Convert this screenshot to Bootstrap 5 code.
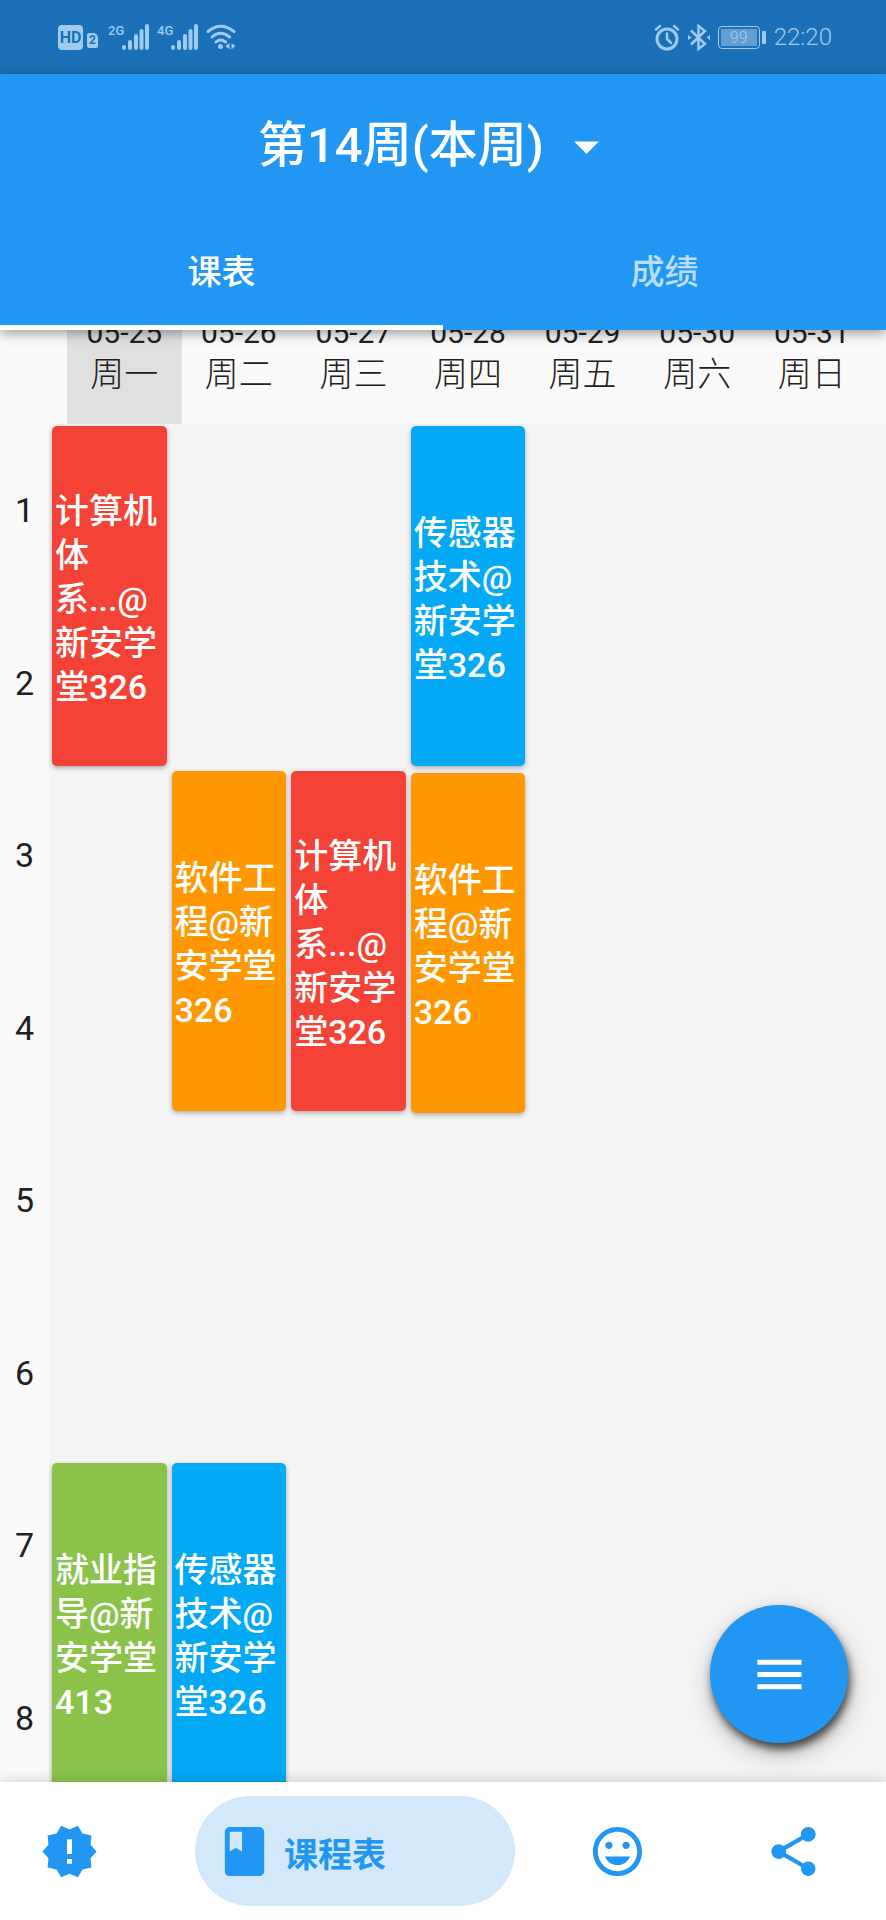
<!DOCTYPE html>
<html lang="zh-CN">
<head>
<meta charset="utf-8">
<meta name="viewport" content="width=device-width, initial-scale=1">
<title>课程表</title>
<link href="https://cdn.jsdelivr.net/npm/bootstrap@5.3.0/dist/css/bootstrap.min.css" rel="stylesheet">
<style>
  :root { --main: #2196f3; --soft: #9fcbf0; }
  body { font-family: Roboto, "Noto Sans CJK SC", sans-serif; font-size: 34px; line-height: 44px; color: #212121; background: #fafafa; }
  svg { display: block; flex: none; }
  .glyph { width: 59px; height: 59px; fill: currentColor; }

  /* system status bar */
  .statusbar { height: 74px; background: #1b70b7; color: var(--soft); padding: 0 54px 0 58px; }
  .hd { width: 25px; height: 25px; border-radius: 4px; background: var(--soft); color: #1b70b7; font-size: 16px; line-height: 25px; font-weight: 700; }
  .sim { width: 11px; height: 15px; margin: 7px 10px 0 4px; border-radius: 2px 5px 2px 2px; background: var(--soft); color: #1b70b7; font-size: 12px; line-height: 15px; font-weight: 700; }
  .net { font-size: 13px; line-height: 12px; font-weight: 500; height: 25px; width: 14px; white-space: nowrap; }
  .battery { width: 42px; height: 23px; padding: 2px; border: 1px solid var(--soft); border-radius: 4px; }
  .battery span { flex: 1; height: 17px; background: #659fd1; font-size: 16px; line-height: 17px; font-weight: 300; }
  .battery-tip { width: 4px; height: 13px; border-radius: 1px; background: var(--soft); margin: 0 8px 0 2px; }
  .clock { font-size: 24px; line-height: 30px; font-weight: 300; }

  /* app bar */
  .appbar { background: var(--main); box-shadow: 0 3px 12px rgba(0,0,0,.4); z-index: 2; }
  .title-row { height: 138px; padding: 6px 12px 0 0; }
  .week-picker {
    width: auto; border: 0; border-radius: 0; color: #fff; font-size: 49px; line-height: 60px; font-weight: 500; padding: 0 72px 0 0;
    background: url("data:image/svg+xml,%3Csvg xmlns='http://www.w3.org/2000/svg' viewBox='0 0 24 24'%3E%3Cpath fill='%23fff' d='M7 10l5 5 5-5z'/%3E%3C/svg%3E") no-repeat right center / 59px 59px;
  }
  .tab { height: 118px; border: 0; border-bottom: 5px solid transparent; background: none; color: rgba(255,255,255,.7); font-weight: 500; padding: 6px 0 0; }
  .tab.active { color: #fff; border-bottom-color: #fff; }

  /* timetable */
  .week-head { height: 94px; padding: 0 17px 0 67px; }
  .day { flex: 1 1 0; padding-bottom: 28px; font-weight: 300; }
  .day.today { background: #e0e0e0; }
  .day-date { font-size: 30px; line-height: 38px; font-weight: 400; }
  .rail { width: 49px; }
  .pair { height: 345px; flex: none; }
  .board { background: #f4f4f4; }
  .day-col { flex: 1 1 0; min-width: 0; padding: 0 2px 0 3px; }
  .course { flex: none; height: 340px; margin: 2px 0 5px; padding: 6px 3px 0; border-radius: 5px; color: #fff; font-weight: 500; box-shadow: 0 2px 5px rgba(0,0,0,.3); }
  .c-red { background: #f44336; }
  .c-sky { background: #03a9f4; }
  .c-orange { background: #ff9800; }
  .c-green { background: #8bc34a; }
  .fab { right: 38px; bottom: 39px; width: 138px; height: 138px; border: 0; background: var(--main); color: #fff; box-shadow: 2px 6px 8px rgba(0,0,0,.65), 2px 10px 26px rgba(0,0,0,.25); }

  /* bottom navigation */
  .bottom-nav { display: grid; grid-template-columns: 195fr 346fr 152fr 193fr; height: 138px; background: #fff; box-shadow: 0 -2px 12px rgba(0,0,0,.15); z-index: 2; }
  .nav-item-btn { height: 110px; border: 0; border-radius: 55px; background: none; color: var(--main); padding: 0 20px; }
  .nav-item-btn.active { width: 320px; background: #d3e8fb; gap: 10px; font-weight: 700; }
  .nav-end { padding-right: 43px; }
</style>
</head>
<body class="vh-100 d-flex flex-column overflow-hidden">

<div class="statusbar d-flex align-items-center justify-content-between flex-shrink-0">
  <div class="d-flex align-items-center">
    <span class="hd text-center">HD</span>
    <span class="sim text-center">2</span>
    <span class="net">2G</span>
    <svg width="27" height="26" viewBox="0 0 27 26" stroke="currentColor" stroke-width="4" stroke-linecap="round"><path d="M2 24v-1M8 24v-6M14 24V12M19.500 24V7M25 24V2"/></svg>
    <span class="net ms-2">4G</span>
    <svg width="27" height="26" viewBox="0 0 27 26" stroke="currentColor" stroke-width="4" stroke-linecap="round"><path d="M2 24v-1M8 24v-6M14 24V12M19.500 24V7M25 24V2"/></svg>
    <svg class="ms-2" width="30" height="26" viewBox="0 0 30 26" fill="none" stroke="currentColor" stroke-width="3" stroke-linecap="round"><path d="M2 7.500Q14.500-3 28 7.500M6 13Q14.500 5.500 23.500 13M10 18Q14.500 14 19.500 18"/><circle cx="14.500" cy="22.500" r="2.500" fill="currentColor" stroke="none"/><path d="M23.500 19v6.500l-4-3.500zM25.500 19.500l4 2-4 4z" fill="currentColor" stroke="none"/></svg>
  </div>
  <div class="d-flex align-items-center">
    <svg width="26" height="27" viewBox="0 0 26 27" fill="none" stroke="currentColor" stroke-width="3" stroke-linecap="round"><circle cx="13" cy="15" r="10"/><path d="M13 9.500V15l4 4M2 5.500L6 2M24 5.500L20 2" stroke-width="2.500"/></svg>
    <svg class="ms-2" width="22" height="27" viewBox="0 0 22 27" fill="none" stroke="currentColor" stroke-width="2.500"><path d="M3 6.500l14 13.500-6.500 5V2l6.500 5L3 20.500"/><path d="M0 11l3.500 2.500L0 16zM22 11l-3.500 2.500L22 16z" fill="currentColor" stroke="none"/></svg>
    <div class="battery d-flex ms-2"><span class="text-center">99</span></div>
    <i class="battery-tip"></i>
    <span class="clock">22:20</span>
  </div>
</div>

<header class="appbar position-relative flex-shrink-0">
  <div class="title-row d-flex align-items-center justify-content-center">
    <select class="form-select week-picker" aria-label="周次"><option selected>第14周(本周)</option></select>
  </div>
  <div class="d-flex" role="tablist">
    <button type="button" class="tab active flex-fill w-50" role="tab" aria-selected="true">课表</button>
    <button type="button" class="tab flex-fill w-50" role="tab" aria-selected="false">成绩</button>
  </div>
</header>

<main class="position-relative flex-fill d-flex flex-column overflow-hidden">
  <div class="week-head d-flex flex-shrink-0 text-center overflow-hidden">
    <div class="day today d-flex flex-column justify-content-end"><div class="day-date">05-25</div><div>周一</div></div>
    <div class="day d-flex flex-column justify-content-end"><div class="day-date">05-26</div><div>周二</div></div>
    <div class="day d-flex flex-column justify-content-end"><div class="day-date">05-27</div><div>周三</div></div>
    <div class="day d-flex flex-column justify-content-end"><div class="day-date">05-28</div><div>周四</div></div>
    <div class="day d-flex flex-column justify-content-end"><div class="day-date">05-29</div><div>周五</div></div>
    <div class="day d-flex flex-column justify-content-end"><div class="day-date">05-30</div><div>周六</div></div>
    <div class="day d-flex flex-column justify-content-end"><div class="day-date">05-31</div><div>周日</div></div>
  </div>
  <div class="d-flex flex-fill overflow-hidden">
    <div class="rail d-flex flex-column flex-shrink-0 text-center">
      <div class="pair d-flex flex-column justify-content-around"><span>1</span><span>2</span></div>
      <div class="pair d-flex flex-column justify-content-around"><span>3</span><span>4</span></div>
      <div class="pair d-flex flex-column justify-content-around"><span>5</span><span>6</span></div>
      <div class="pair d-flex flex-column justify-content-around"><span>7</span><span>8</span></div>
    </div>
    <div class="board d-flex flex-fill">
      <div class="day-col d-flex flex-column">
        <div class="course c-red d-flex align-items-center">计算机体系...@新安学堂326</div>
        <div class="pair"></div>
        <div class="pair"></div>
        <div class="course c-green d-flex align-items-center">就业指导@新安学堂413</div>
      </div>
      <div class="day-col d-flex flex-column">
        <div class="pair"></div>
        <div class="course c-orange d-flex align-items-center">软件工程@新安学堂326</div>
        <div class="pair"></div>
        <div class="course c-sky d-flex align-items-center">传感器技术@新安学堂326</div>
      </div>
      <div class="day-col d-flex flex-column">
        <div class="pair"></div>
        <div class="course c-red d-flex align-items-center">计算机体系...@新安学堂326</div>
      </div>
      <div class="day-col d-flex flex-column">
        <div class="course c-sky d-flex align-items-center">传感器技术@新安学堂326</div>
        <div class="course c-orange d-flex align-items-center">软件工程@新安学堂326</div>
      </div>
      <div class="day-col"></div>
      <div class="day-col"></div>
      <div class="day-col"></div>
    </div>
  </div>
  <button type="button" class="fab position-absolute rounded-circle d-flex align-items-center justify-content-center" aria-label="菜单">
    <svg class="glyph" viewBox="0 0 24 24"><path d="M3 18h18v-2H3v2zm0-5h18v-2H3v2zm0-7v2h18V6H3z"/></svg>
  </button>
</main>

<nav class="bottom-nav position-relative flex-shrink-0 align-items-center">
  <div class="d-flex ps-3 ms-1">
    <button type="button" class="nav-item-btn" aria-label="公告"><svg class="glyph" viewBox="0 0 24 24"><path d="M23 12l-2.440-2.780.340-3.680-3.610-.820-1.890-3.180L12 3 8.600 1.540 6.710 4.720l-3.610.810.340 3.680L1 12l2.440 2.780-.340 3.690 3.610.820 1.890 3.180L12 21l3.400 1.460 1.890-3.180 3.610-.820-.340-3.680L23 12zm-10 5h-2v-2h2v2zm0-4h-2V7h2v6z"/></svg></button>
  </div>
  <button type="button" class="nav-item-btn active d-flex align-items-center" aria-current="page">
    <svg class="glyph" viewBox="0 0 24 24"><path d="M18 2H6c-1.100 0-2 .9-2 2v16c0 1.100.9 2 2 2h12c1.100 0 2-.9 2-2V4c0-1.100-.9-2-2-2zM6 4h5v8l-2.500-1.500L6 12V4z"/></svg>
    <span class="pt-2">课程表</span>
  </button>
  <div class="d-flex justify-content-center">
    <button type="button" class="nav-item-btn" aria-label="表情"><svg class="glyph" viewBox="0 0 24 24"><path d="M11.990 2C6.470 2 2 6.480 2 12s4.470 10 9.990 10C17.520 22 22 17.520 22 12S17.520 2 11.990 2zM12 20c-4.420 0-8-3.580-8-8s3.580-8 8-8 8 3.580 8 8-3.580 8-8 8zm3.500-9c.830 0 1.500-.670 1.500-1.500S16.330 8 15.500 8 14 8.670 14 9.500s.670 1.500 1.500 1.500zm-7 0c.830 0 1.500-.670 1.500-1.500S9.330 8 8.500 8 7 8.670 7 9.500 7.670 11 8.500 11zm3.500 6.500c2.330 0 4.310-1.460 5.110-3.500H6.890c.8 2.040 2.780 3.500 5.110 3.500z"/></svg></button>
  </div>
  <div class="nav-end d-flex justify-content-end">
    <button type="button" class="nav-item-btn" aria-label="分享"><svg class="glyph" viewBox="0 0 24 24"><path d="M18 16.080c-.760 0-1.440.3-1.960.770L8.910 12.700c.050-.230.090-.460.090-.7s-.040-.470-.090-.7l7.050-4.110c.540.5 1.250.810 2.040.810 1.660 0 3-1.340 3-3s-1.340-3-3-3-3 1.340-3 3c0 .240.040.470.090.7L8.040 9.810C7.500 9.310 6.790 9 6 9c-1.660 0-3 1.340-3 3s1.340 3 3 3c.790 0 1.500-.310 2.040-.810l7.120 4.160c-.050.210-.080.430-.080.650 0 1.610 1.310 2.920 2.920 2.920s2.920-1.310 2.920-2.920-1.310-2.920-2.920-2.920z"/></svg></button>
  </div>
</nav>

<script src="https://cdn.jsdelivr.net/npm/bootstrap@5.3.0/dist/js/bootstrap.bundle.min.js"></script>
</body>
</html>
